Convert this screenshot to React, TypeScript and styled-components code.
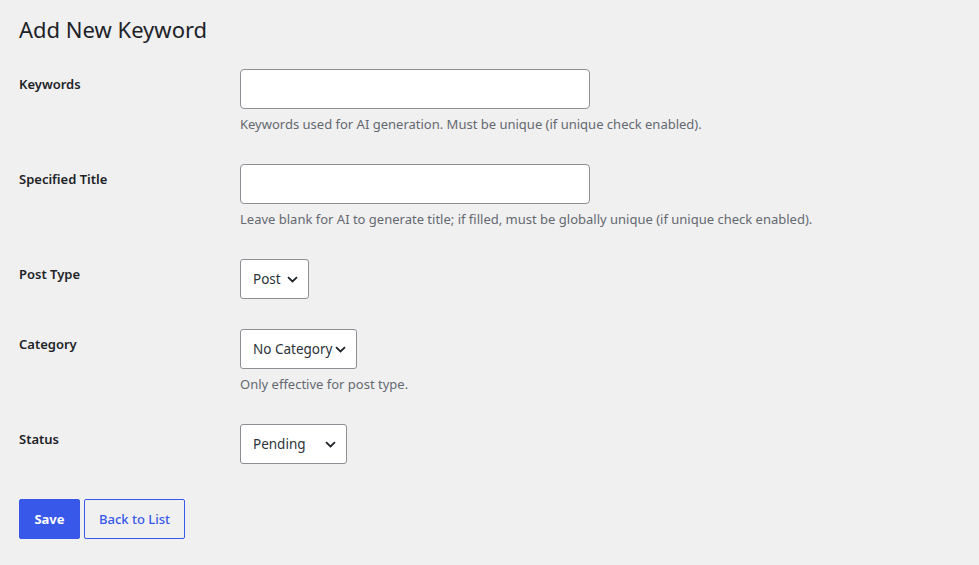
import React from 'react'
import styled, { createGlobalStyle } from 'styled-components'

const GlobalStyle = createGlobalStyle`
  html, body {
    margin: 0;
    background: #f0f0f1;
  }
  body {
    font-family: "Noto Sans", "Liberation Sans", sans-serif;
    color: #1d2327;
    font-size: 13px;
  }
`

type Field = {
  id: string
  label: string
  kind: 'text' | 'select'
  options?: string[]
  width?: number
  description?: string
}

const fields: Field[] = [
  {
    id: 'keywords',
    label: 'Keywords',
    kind: 'text',
    description: 'Keywords used for AI generation. Must be unique (if unique check enabled).',
  },
  {
    id: 'title',
    label: 'Specified Title',
    kind: 'text',
    description: 'Leave blank for AI to generate title; if filled, must be globally unique (if unique check enabled).',
  },
  { id: 'post_type', label: 'Post Type', kind: 'select', options: ['Post', 'Page'], width: 69 },
  {
    id: 'category',
    label: 'Category',
    kind: 'select',
    options: ['No Category'],
    width: 117,
    description: 'Only effective for post type.',
  },
  { id: 'status', label: 'Status', kind: 'select', options: ['Pending', 'Published', 'Failed'], width: 107 },
]

function Chevron() {
  return (
    <ChevronIcon width="11" height="7" viewBox="0 0 11 7" aria-hidden>
      <path d="M1 1.2 L5.5 5.5 L10 1.2" fill="none" stroke="#1d2327" strokeWidth="1.8" />
    </ChevronIcon>
  )
}

export default function App() {
  return (
    <>
      <GlobalStyle />
      <Wrap>
        <Heading>Add New Keyword</Heading>
        <form onSubmit={(e) => e.preventDefault()}>
          <FormTable>
            <tbody>
              {fields.map((f) => (
                <tr key={f.id}>
                  <Th scope="row">
                    <Label htmlFor={f.id}>{f.label}</Label>
                  </Th>
                  <Td>
                    {f.kind === 'text' ? (
                      <TextInput id={f.id} type="text" />
                    ) : (
                      <SelectWrap $width={f.width}>
                        <Select id={f.id}>
                          {f.options?.map((o) => (
                            <option key={o}>{o}</option>
                          ))}
                        </Select>
                        <Chevron />
                      </SelectWrap>
                    )}
                    {f.description && <Description>{f.description}</Description>}
                  </Td>
                </tr>
              ))}
            </tbody>
          </FormTable>
          <Actions>
            <PrimaryButton type="submit">Save</PrimaryButton>
            <SecondaryButton type="button">Back to List</SecondaryButton>
          </Actions>
        </form>
      </Wrap>
    </>
  )
}

const Wrap = styled.div`
  padding: 5px 20px 0 19px;
`

const Heading = styled.h1`
  margin: 0;
  padding: 9px 0 4px;
  font-size: 22px;
  font-weight: 400;
  line-height: 30px;
  color: #1d2327;
`

const FormTable = styled.table`
  margin-top: 6px;
  border-collapse: collapse;
  width: 100%;
`

const Th = styled.th`
  width: 200px;
  padding: 21px 10px 19px 0;
  text-align: left;
  vertical-align: top;
`

const Label = styled.label`
  display: block;
  font-size: 13px;
  font-weight: 600;
  line-height: 18px;
  color: #1d2327;
`

const Td = styled.td`
  padding: 15px 10px 15px 11px;
  vertical-align: top;
`

const TextInput = styled.input`
  display: block;
  box-sizing: border-box;
  width: 350px;
  height: 40px;
  margin: 0;
  padding: 0 8px;
  border: 1px solid #8c8f94;
  border-radius: 4px;
  background: #fff;
  font: inherit;
  font-size: 14px;
  color: #2c3338;
`

const SelectWrap = styled.div<{ $width?: number }>`
  position: relative;
  width: ${(p) => p.$width ?? 120}px;
  height: 40px;
`

const Select = styled.select`
  appearance: none;
  box-sizing: border-box;
  width: 100%;
  height: 100%;
  margin: 0;
  padding: 0 22px 0 12px;
  border: 1px solid #8c8f94;
  border-radius: 3px;
  background: #fff;
  font-family: inherit;
  font-size: 13.5px;
  color: #2c3338;
`

const ChevronIcon = styled.svg`
  position: absolute;
  right: 11px;
  top: 17px;
  pointer-events: none;
`

const Description = styled.p`
  margin: 6px 0 0;
  font-size: 13px;
  line-height: 19px;
  color: #646970;
`

const Actions = styled.p`
  display: flex;
  gap: 4px;
  margin: 20px 0 0;
`

const BaseButton = styled.button`
  box-sizing: border-box;
  height: 40px;
  padding: 0;
  border-radius: 2px;
  font-family: inherit;
  font-size: 13px;
  white-space: nowrap;
  cursor: pointer;
`

const PrimaryButton = styled(BaseButton)`
  width: 61px;
  border: 1px solid #3858e9;
  background: #3858e9;
  color: #fff;
  font-weight: 700;
`

const SecondaryButton = styled(BaseButton)`
  width: 101px;
  border: 1px solid #3858e9;
  background: transparent;
  color: #3858e9;
  font-weight: 500;
`
